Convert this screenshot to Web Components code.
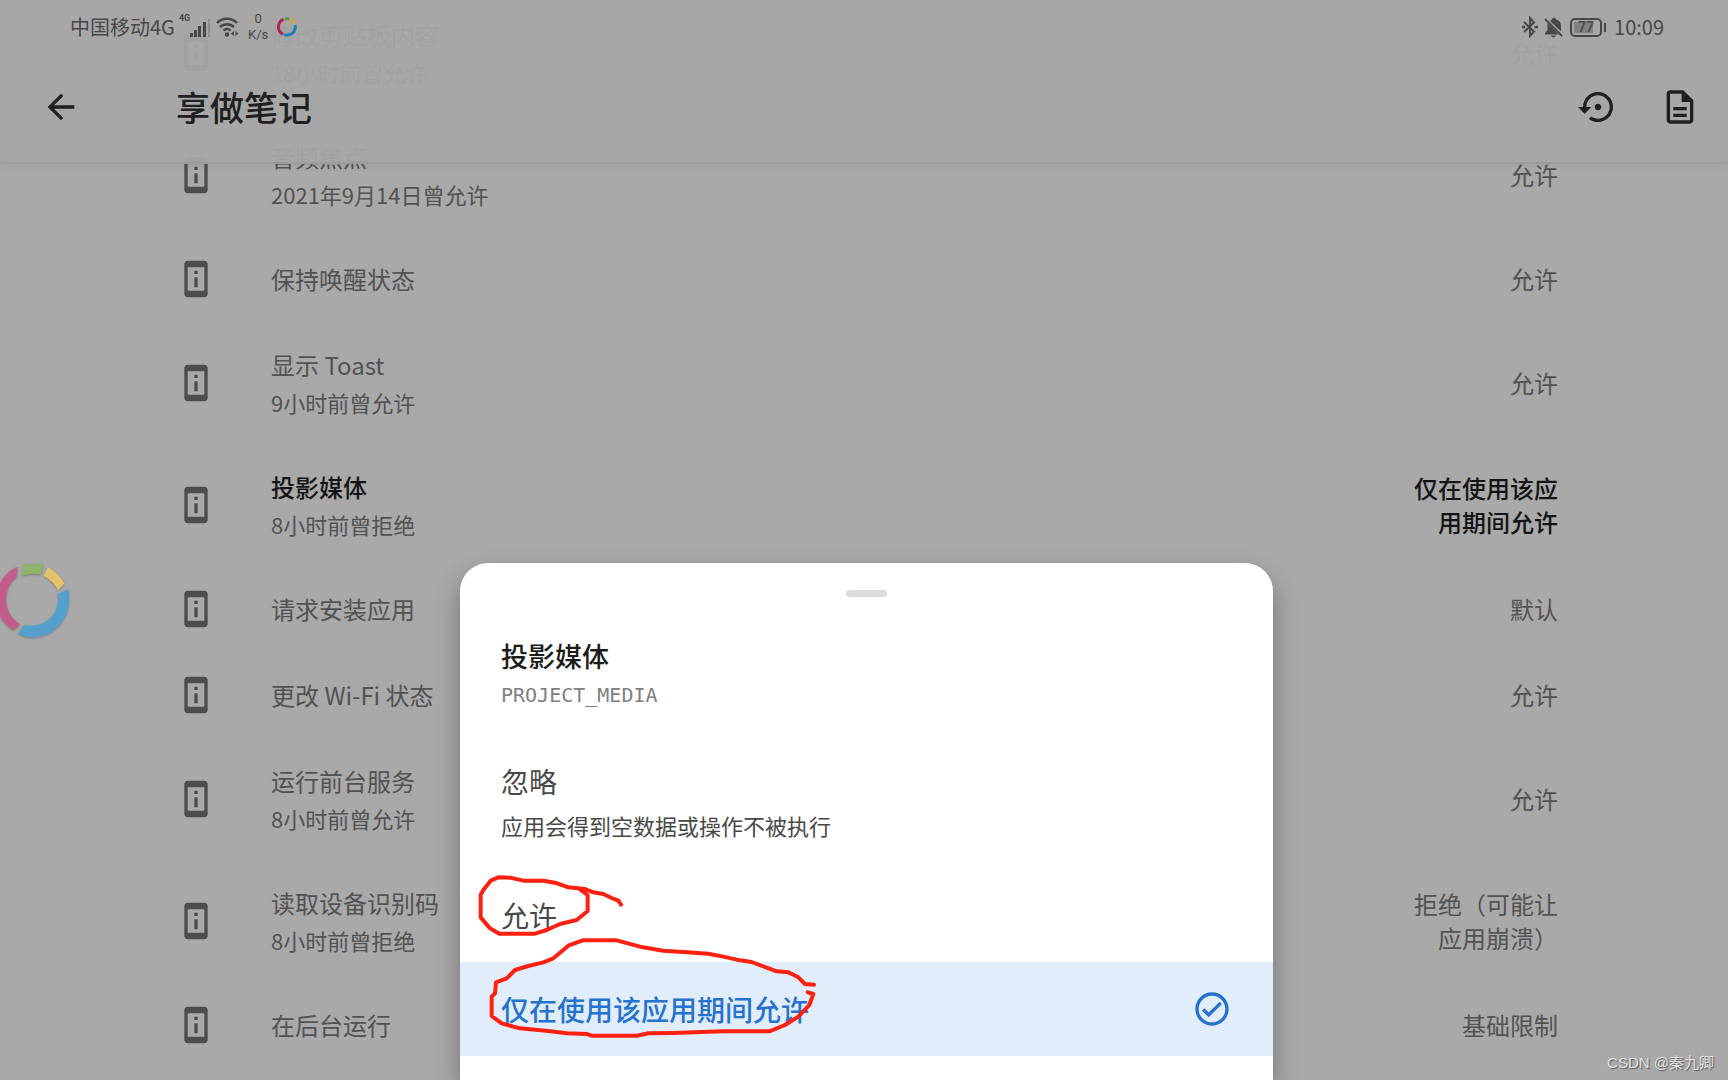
<!DOCTYPE html>
<html lang="zh-CN">
<head>
<meta charset="utf-8">
<meta name="viewport" content="width=device-width, initial-scale=1">
<title>享做笔记</title>
<style>
  :root {
    --bg: #a9a9a9;
    --bar-bg: rgba(167, 167, 167, 0.94);
    --text-strong: #141414;
    --text: #525252;
    --icon: #4d4d4d;
    --accent: #2672d0;
    --accent-bg: #e1edfb;
    --mark: #ff2010;
  }
  html, body {
    height: 100%;
    margin: 0;
  }
  body {
    background: var(--bg);
    color: var(--text);
    font-family: "Noto Sans CJK SC", sans-serif;
    font-size: 24px;
    line-height: 34px;
    overflow: hidden;
  }
</style>
</head>
<body>
<ops-app></ops-app>

<script>
const ICONS = {
  back: '<path d="M20 11H7.8l5.6-5.6L12 4l-8 8 8 8 1.4-1.4L7.8 13H20z"/>',
  restore: '<path d="M14 12c0-1.1-.9-2-2-2s-2 .9-2 2 .9 2 2 2 2-.9 2-2zm-2-9c-4.97 0-9 4.03-9 9H0l4 4 4-4H5c0-3.87 3.13-7 7-7s7 3.13 7 7-3.13 7-7 7c-1.51 0-2.91-.49-4.06-1.3l-1.42 1.44C8.04 20.3 9.94 21 12 21c4.97 0 9-4.03 9-9s-4.03-9-9-9z"/>',
  doc: '<path d="M8 16h8v2H8zm0-4h8v2H8zm6-10H6c-1.1 0-2 .9-2 2v16c0 1.1.89 2 1.99 2H18c1.1 0 2-.9 2-2V8l-6-6zm4 18H6V4h7v5h5v11z"/>',
  device: '<path d="M13 7h-2v2h2V7zm0 4h-2v6h2v-6zm4-9.99L7 1c-1.1 0-2 .9-2 2v18c0 1.1.9 2 2 2h10c1.1 0 2-.9 2-2V3c0-1.1-.9-1.99-2-1.99zM17 19H7V5h10v14z"/>',
  check: '<path d="M12 2C6.48 2 2 6.48 2 12s4.48 10 10 10 10-4.48 10-10S17.52 2 12 2zm0 18c-4.41 0-8-3.59-8-8s3.59-8 8-8 8 3.59 8 8-3.59 8-8 8zm4.59-12.42L10 14.17l-2.59-2.58L6 13l4 4 8-8z"/>',
};

class AppIcon extends HTMLElement {
  constructor() {
    super();
    this.attachShadow({ mode: "open" });
  }

  connectedCallback() {
    this.shadowRoot.innerHTML = `
      <style>
        :host { display: block; width: 40px; height: 40px; flex: none; }
        svg { display: block; width: 100%; height: 100%; fill: currentColor; }
      </style>
      <svg viewBox="0 0 24 24" aria-hidden="true">${ICONS[this.getAttribute("name")]}</svg>
    `;
  }
}
customElements.define("app-icon", AppIcon);

class StatusBar extends HTMLElement {
  constructor() {
    super();
    this.attachShadow({ mode: "open" });
    this.shadowRoot.innerHTML = `
      <style>
        :host {
          display: flex;
          justify-content: space-between;
          align-items: center;
          height: 54px;
          padding: 0 64px 0 70px;
          color: #484848;
          font-size: 20px;
          line-height: 24px;
        }
        .group { display: flex; align-items: center; }
        svg { display: block; flex: none; }
        .net {
          align-self: flex-start;
          margin: 2px 0 0 4px;
          font: bold 9px/10px Roboto, sans-serif;
        }
        .wifi { margin-left: 5px; }
        .speed {
          width: 22px;
          margin-left: 7px;
          font: 13px/16px Roboto, sans-serif;
          text-align: center;
        }
        .ring { margin-left: 8px; }
        .bell { margin-left: 6px; }
        .battery {
          display: flex;
          align-items: center;
          margin: 0 8px 0 6px;
        }
        .cell {
          box-sizing: border-box;
          width: 32px;
          height: 19px;
          border: 2px solid #484848;
          border-radius: 5px;
          background: linear-gradient(#818181, #818181) 2px 2px / 19px 11px no-repeat;
          font: 500 14px/15px Roboto, sans-serif;
          text-align: center;
        }
        .tip { width: 2px; height: 9px; margin-left: 2px; background: #484848; }
      </style>
      <div class="group">
        <span>中国移动4G</span>
        <span class="net">4G</span>
        <svg width="21" height="24" viewBox="0 0 21 24" fill="#484848">
          <rect x="0" y="18" width="3" height="4"/>
          <rect x="4" y="15" width="3" height="7"/>
          <rect x="8" y="11" width="3" height="11"/>
          <rect x="13" y="7" width="3" height="15"/>
          <rect x="18" y="4" width="2" height="18" fill="#8b8b8b"/>
        </svg>
        <svg class="wifi" width="24" height="22" viewBox="0 0 24 22" fill="none" stroke="#484848" stroke-width="2.500">
          <path d="M1 7a14 14 0 0 1 20 0M4 11a10 10 0 0 1 14 0M7.500 14.500a5.500 5.500 0 0 1 7 0"/>
          <circle cx="11" cy="18.500" r="1"/>
          <path d="M18 15v5l-3-2.500zM19.500 15v5l3-2.500z" fill="#484848" stroke="none"/>
        </svg>
        <div class="speed">0<br>K/s</div>
        <svg class="ring" width="20" height="20" viewBox="0 0 20 20" fill="none" stroke-width="3">
          <path stroke="#b02358" d="M6.500 2.300A8.200 8.200 0 0 0 6 17.200"/>
          <path stroke="#5f9a43" d="M7.800 2A8.200 8.200 0 0 1 12.400 2.100"/>
          <path stroke="#d6a52d" d="M13.600 2.600A8.200 8.200 0 0 1 17.300 6"/>
          <path stroke="#1c7fb4" d="M18 8A8.200 8.200 0 0 1 7 17.600"/>
        </svg>
      </div>
      <div class="group">
        <svg width="16" height="22" viewBox="0 0 16 22" fill="none" stroke="#484848" stroke-width="2">
          <path d="m2 6 10 9.500L8 20V2l4 4.500L2 16"/>
          <path d="M0 11h3M12.500 11H16" stroke-width="2.500"/>
        </svg>
        <svg class="bell" width="20" height="21" viewBox="0 0 20 21" fill="#484848">
          <path d="M3.500 6 15 17.500H1V16l2.500-3zM6 4l2-1.500c0-2.500 4-2.500 4 0 4 1 5 4 5 7V14.500zM7 18.500h5c-1 2.500-4 2.500-5 0z"/>
          <path d="M1 2l17 17" stroke="#484848" stroke-width="1.800"/>
        </svg>
        <div class="battery"><div class="cell">77</div><div class="tip"></div></div>
        <span>10:09</span>
      </div>
    `;
  }
}
customElements.define("status-bar", StatusBar);

class AppHeader extends HTMLElement {
  constructor() {
    super();
    this.attachShadow({ mode: "open" });
    this.shadowRoot.innerHTML = `
      <style>
        :host {
          display: block;
          position: absolute;
          inset: 0 0 auto;
          padding-bottom: 2px;
          border-bottom: 2px solid #9c9c9c;
          background: var(--bar-bg);
          background-clip: padding-box;
          box-shadow: 0 2px 6px rgba(0, 0, 0, 0.06);
        }
        .toolbar {
          display: flex;
          align-items: center;
          height: 106px;
          padding: 0 28px 0 41px;
          color: #202020;
        }
        h1 {
          flex: 1;
          margin: 0 0 0 95px;
          font-size: 34px;
          font-weight: 500;
          line-height: 48px;
        }
        button {
          padding: 0;
          border: 0;
          background: none;
          color: inherit;
          cursor: pointer;
        }
        button + button { margin-left: 42px; }
      </style>
      <status-bar></status-bar>
      <div class="toolbar">
        <button aria-label="返回"><app-icon name="back"></app-icon></button>
        <h1><slot></slot></h1>
        <button aria-label="重置"><app-icon name="restore"></app-icon></button>
        <button aria-label="记录"><app-icon name="doc"></app-icon></button>
      </div>
    `;
  }
}
customElements.define("app-header", AppHeader);

class OpRow extends HTMLElement {
  constructor() {
    super();
    this.attachShadow({ mode: "open" });
  }

  connectedCallback() {
    const note = this.getAttribute("note");
    this.shadowRoot.innerHTML = `
      <style>
        :host {
          display: flex;
          align-items: center;
          padding: 26px 170px 26px 176px;
        }
        app-icon { color: var(--icon); margin: -3px 55px -3px 0; }
        .text { flex: 1; }
        .note { margin-top: 4px; font-size: 22px; line-height: 32px; }
        .mode { max-width: 146px; text-align: right; }
        :host([changed]) .title,
        :host([changed]) .mode { color: var(--text-strong); font-weight: 500; }
      </style>
      <app-icon name="device"></app-icon>
      <div class="text">
        <div class="title"><slot></slot></div>
        ${note ? `<div class="note">${note}</div>` : ""}
      </div>
      <div class="mode">${this.getAttribute("mode")}</div>
    `;
  }
}
customElements.define("op-row", OpRow);

class OpList extends HTMLElement {
  constructor() {
    super();
    this.attachShadow({ mode: "open" });
    this.shadowRoot.innerHTML = `
      <style>
        :host {
          display: block;
          height: 100%;
          overflow-y: auto;
          scrollbar-width: none;
        }
        .rows { padding: 16px 0 96px; }
      </style>
      <div class="rows"><slot></slot></div>
    `;
  }
}
customElements.define("op-list", OpList);

class ModeOption extends HTMLElement {
  constructor() {
    super();
    this.attachShadow({ mode: "open" });
  }

  connectedCallback() {
    const note = this.getAttribute("note");
    const selected = this.hasAttribute("selected");
    this.shadowRoot.innerHTML = `
      <style>
        :host { display: block; }
        button {
          display: flex;
          align-items: center;
          justify-content: space-between;
          width: 100%;
          padding: 27px 41px;
          border: 0;
          background: none;
          color: #484848;
          font: inherit;
          text-align: left;
          cursor: pointer;
        }
        .title { display: block; font-size: 28px; line-height: 40px; }
        .note { display: block; margin-top: 8px; font-size: 22px; line-height: 32px; }
        :host([selected]) button { background: var(--accent-bg); color: var(--accent); }
        :host([selected]) .title { font-weight: 500; }
      </style>
      <button role="radio" aria-checked="${selected}">
        <span>
          <span class="title"><slot></slot></span>
          ${note ? `<span class="note">${note}</span>` : ""}
        </span>
        ${selected ? '<app-icon name="check"></app-icon>' : ""}
      </button>
    `;
  }
}
customElements.define("mode-option", ModeOption);

class BottomSheet extends HTMLElement {
  constructor() {
    super();
    this.attachShadow({ mode: "open" });
  }

  connectedCallback() {
    this.shadowRoot.innerHTML = `
      <style>
        :host {
          display: block;
          position: absolute;
          left: 460px;
          right: 455px;
          bottom: 0;
          padding-bottom: 24px;
          border-radius: 28px 28px 0 0;
          background: #fff;
          box-shadow: 0 12px 26px rgba(0, 0, 0, 0.32);
        }
        .handle {
          width: 41px;
          height: 7px;
          margin: 0 auto 39px;
          border-radius: 4px;
          background: #dcdcdc;
        }
        header { padding: 27px 0 24px; }
        h2 {
          margin: 0 41px 4px;
          color: #1c1c1c;
          font-size: 27px;
          font-weight: 500;
          line-height: 40px;
        }
        code {
          display: block;
          margin: 0 41px;
          color: #808080;
          font: 20px/30px "DejaVu Sans Mono", monospace;
        }
      </style>
      <header>
        <div class="handle"></div>
        <h2>${this.getAttribute("heading")}</h2>
        <code>${this.getAttribute("code")}</code>
      </header>
      <div role="radiogroup"><slot></slot></div>
      <slot name="over"></slot>
    `;
  }
}
customElements.define("bottom-sheet", BottomSheet);

// hand-drawn circles over the two options
class PenMarks extends HTMLElement {
  constructor() {
    super();
    this.attachShadow({ mode: "open" });
    this.shadowRoot.innerHTML = `
      <style>
        :host {
          display: block;
          position: absolute;
          left: 0;
          bottom: 0;
          width: 380px;
          height: 220px;
          pointer-events: none;
        }
        svg { display: block; }
      </style>
      <svg width="380" height="220" viewBox="60 60 1140 660" fill="none" stroke="var(--mark)"
           stroke-width="12" stroke-linecap="round" stroke-linejoin="round">
        <path d="M543 194 535 182 515 174 490 162 460 157 435 147 385 142 345 128 310 122 250 122 210 113
                 175 112 152 122 130 150 122 165 122 232 150 265 178 281 285 281 320 270 360 252 410 240
                 443 213 443 165 420 148"/>
        <path d="M1122 434 1095 432 1075 412 1045 397 1010 394 935 366 900 361 850 350 805 341 730 336
                 670 332 600 320 530 301 428 301 385 317 340 355 310 367 265 378 225 390 200 415 168 427
                 165 460 155 470 155 528 185 550 240 565 325 573 380 580 440 582 455 587 590 587 625 580
                 700 579 850 574 988 574 1035 555 1075 530 1108 495 1120 462 1103 457"/>
      </svg>
    `;
  }
}
customElements.define("pen-marks", PenMarks);

// floating ball docked on the left edge
class FloatBall extends HTMLElement {
  constructor() {
    super();
    this.attachShadow({ mode: "open" });
    this.shadowRoot.innerHTML = `
      <style>
        :host { display: block; position: absolute; left: 0; top: 560px; }
        button { display: block; padding: 0; border: 0; background: none; cursor: pointer; }
        svg { display: block; filter: drop-shadow(0 1px 1px rgba(0, 0, 0, 0.25)); }
      </style>
      <button aria-label="悬浮球">
        <svg width="73" height="80" viewBox="0 60 219 240">
          <path fill="#c25c88" d="M53 80 50 112Q19 132 18 180 20 228 61 253L40 270Q-9 240-12 180-6 104 53 80z"/>
          <path fill="#8fb56c" d="M71 72 131 73 122 104Q95 98 65 107z"/>
          <path fill="#e6c266" d="M144 82Q176 100 193 130L175 151Q158 120 130 108z"/>
          <path fill="#549fcb" d="M205 147Q216 214 178 256 138 298 85 291 68 288 55 281L72 256Q125 263 155 230 180 203 173 163z"/>
        </svg>
      </button>
    `;
  }
}
customElements.define("float-ball", FloatBall);

class OpsApp extends HTMLElement {
  constructor() {
    super();
    this.attachShadow({ mode: "open" });
  }

  connectedCallback() {
    this.shadowRoot.innerHTML = `
      <style>
        :host {
          display: block;
          position: relative;
          height: 100vh;
          overflow: hidden;
        }
        .credit {
          position: absolute;
          right: 14px;
          bottom: 6px;
          color: #e2e2e2;
          font: 15px/22px "Liberation Sans", "Noto Sans CJK SC", sans-serif;
          text-shadow: 1px 1px 1px #555;
        }
      </style>
      <op-list>
        <op-row note="18小时前曾允许" mode="允许">修改剪贴板内容</op-row>
        <op-row note="2021年9月14日曾允许" mode="允许">音频焦点</op-row>
        <op-row mode="允许">保持唤醒状态</op-row>
        <op-row note="9小时前曾允许" mode="允许">显示 Toast</op-row>
        <op-row note="8小时前曾拒绝" mode="仅在使用该应用期间允许" changed>投影媒体</op-row>
        <op-row mode="默认">请求安装应用</op-row>
        <op-row mode="允许">更改 Wi-Fi 状态</op-row>
        <op-row note="8小时前曾允许" mode="允许">运行前台服务</op-row>
        <op-row note="8小时前曾拒绝" mode="拒绝（可能让应用崩溃）">读取设备识别码</op-row>
        <op-row mode="基础限制">在后台运行</op-row>
      </op-list>
      <app-header>享做笔记</app-header>
      <float-ball></float-ball>
      <bottom-sheet heading="投影媒体" code="PROJECT_MEDIA">
        <mode-option note="应用会得到空数据或操作不被执行">忽略</mode-option>
        <mode-option>允许</mode-option>
        <mode-option selected>仅在使用该应用期间允许</mode-option>
        <pen-marks slot="over"></pen-marks>
      </bottom-sheet>
      <div class="credit">CSDN @秦九卿</div>
    `;
    // rows slide under the header
    this.shadowRoot.querySelector("op-list").scrollTop = 24;
  }
}
customElements.define("ops-app", OpsApp);
</script>
</body>
</html>
